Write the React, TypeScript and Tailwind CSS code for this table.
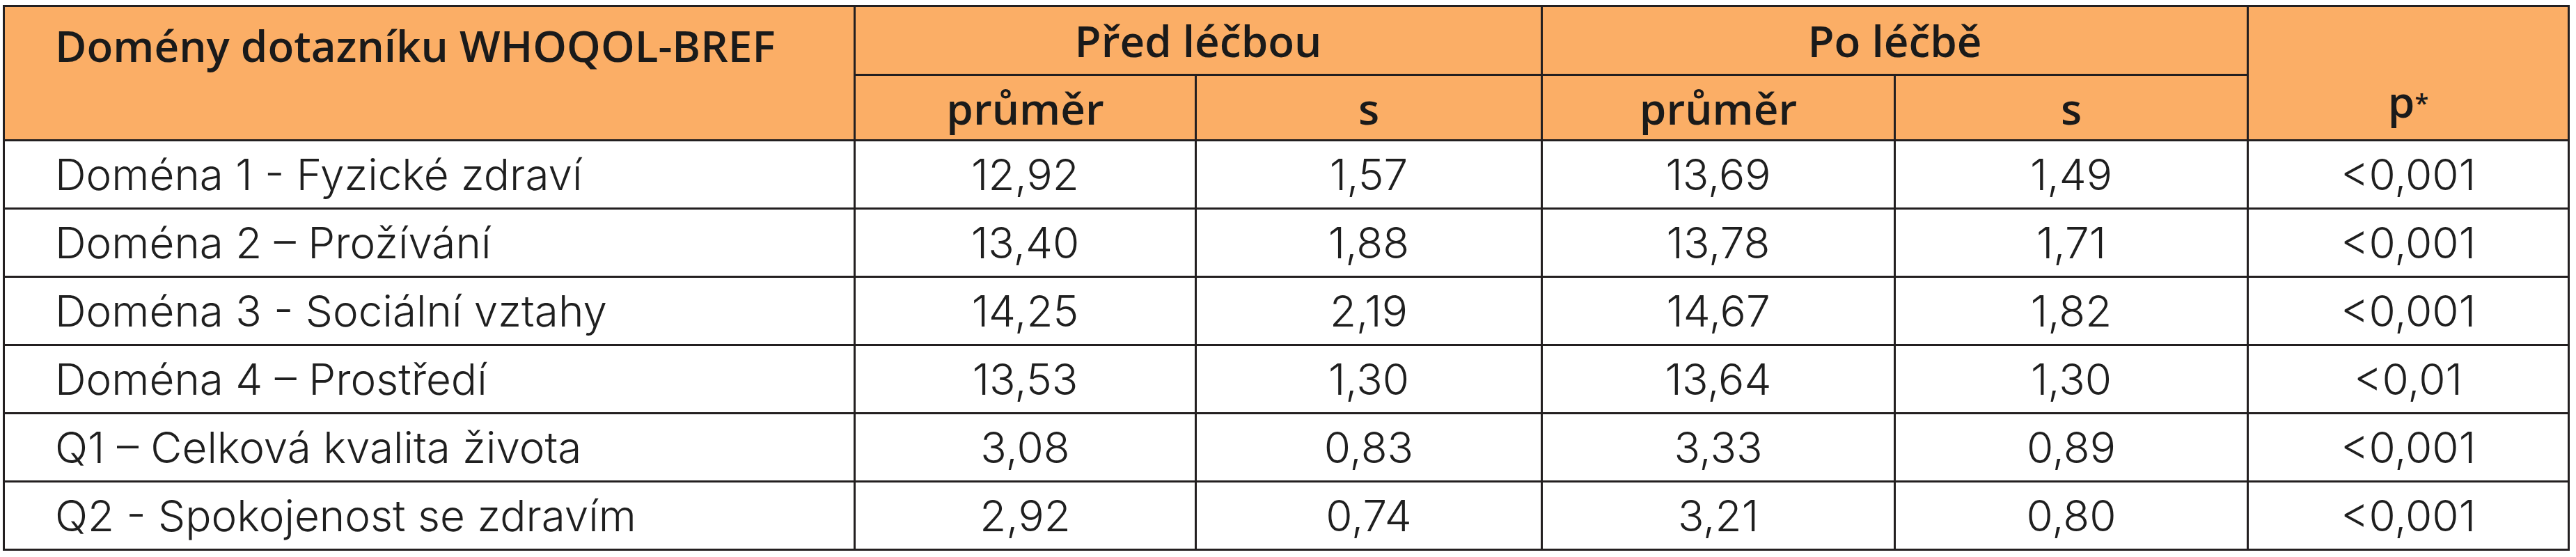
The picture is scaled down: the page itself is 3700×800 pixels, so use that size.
import React from "react";

const rows: [string, string, string, string, string, string][] = [
  ["Doména 1 - Fyzické zdraví", "12,92", "1,57", "13,69", "1,49", "<0,001"],
  ["Doména 2 – Prožívání", "13,40", "1,88", "13,78", "1,71", "<0,001"],
  ["Doména 3 - Sociální vztahy", "14,25", "2,19", "14,67", "1,82", "<0,001"],
  ["Doména 4 – Prostředí", "13,53", "1,30", "13,64", "1,30", "<0,01"],
  ["Q1 – Celková kvalita života", "3,08", "0,83", "3,33", "0,89", "<0,001"],
  ["Q2 - Spokojenost se zdravím", "2,92", "0,74", "3,21", "0,80", "<0,001"],
];

export default function App() {
  const head = "border-[3px] border-[#231f20] bg-[#fbae66] text-[#1a1a1a] font-semibold text-[62px] leading-none p-0";
  const cell = "border-[3px] border-[#231f20] text-[#1f1f1f] font-light text-[62px] leading-none p-0 text-center";
  return (
    <div className="w-[3700px] h-[800px] bg-white pt-[7px] pl-[4px]">
      <table
        className="border-collapse table-fixed w-[3684px]"
        style={{ fontFamily: "'Open Sans', 'Noto Sans', sans-serif" }}
      >
        <colgroup>
          <col className="w-[1222px]" />
          <col className="w-[490px]" />
          <col className="w-[497px]" />
          <col className="w-[507px]" />
          <col className="w-[507px]" />
          <col className="w-[461px]" />
        </colgroup>
        <thead>
          <tr className="h-[99px]">
            <th rowSpan={2} className={`${head} text-left align-top pl-[72px] pt-[24px]`}>
              Domény dotazníku WHOQOL-BREF
            </th>
            <th colSpan={2} className={`${head} text-center`}>Před léčbou</th>
            <th colSpan={2} className={`${head} text-center`}>Po léčbě</th>
            <th rowSpan={2} className={`${head} text-center align-bottom pb-[24px]`}>
              p<sup className="text-[36px] font-semibold relative -top-[8px]">*</sup>
            </th>
          </tr>
          <tr className="h-[94px]">
            <th className={`${head} text-center`}>průměr</th>
            <th className={`${head} text-center`}>s</th>
            <th className={`${head} text-center`}>průměr</th>
            <th className={`${head} text-center`}>s</th>
          </tr>
        </thead>
        <tbody style={{ fontFamily: "Inter, 'Lato', sans-serif" }}>
          {rows.map((r) => (
            <tr key={r[0]} className="h-[98px]">
              <td className={`${cell} !text-left pl-[72px]`}>{r[0]}</td>
              <td className={cell}>{r[1]}</td>
              <td className={cell}>{r[2]}</td>
              <td className={cell}>{r[3]}</td>
              <td className={cell}>{r[4]}</td>
              <td className={cell}>{r[5]}</td>
            </tr>
          ))}
        </tbody>
      </table>
    </div>
  );
}
